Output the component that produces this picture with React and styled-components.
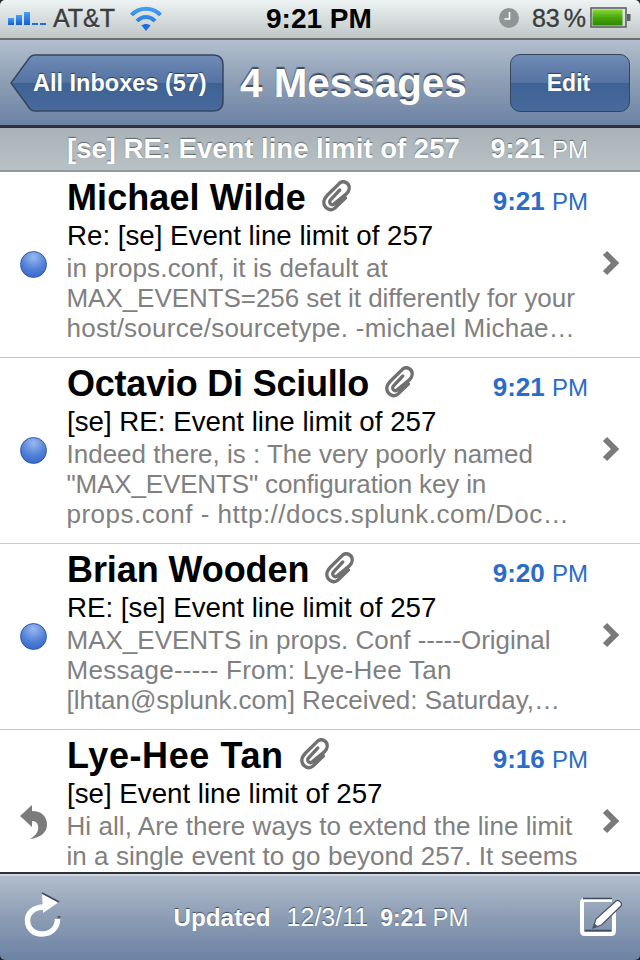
import React from 'react';
import styled, { createGlobalStyle } from 'styled-components';

// names and preview lines carry their own tracking, the device font runs a bit wider on some strings
const messages = [
  {
    name: 'Michael Wilde',
    nameTrack: 0.08,
    time: '9:21',
    subject: 'Re: [se] Event line limit of 257',
    preview: [
      ['in props.conf, it is default at', 0.16],
      ['MAX_EVENTS=256 set it differently for your', -0.05],
      ['host/source/sourcetype. -michael Michae…', 0.25],
    ],
    state: 'unread',
  },
  {
    name: 'Octavio Di Sciullo',
    nameTrack: -0.22,
    time: '9:21',
    subject: '[se] RE: Event line limit of 257',
    preview: [
      ['Indeed there, is : The very poorly named', 0],
      ['"MAX_EVENTS" configuration key in', -0.15],
      ['props.conf - http://docs.splunk.com/Doc…', 0.5],
    ],
    state: 'unread',
  },
  {
    name: 'Brian Wooden',
    nameTrack: -0.08,
    time: '9:20',
    subject: 'RE: [se] Event line limit of 257',
    preview: [
      ['MAX_EVENTS in props. Conf -----Original', 0],
      ['Message----- From: Lye-Hee Tan', 0.27],
      ['[lhtan@splunk.com] Received: Saturday,…', -0.02],
    ],
    state: 'unread',
  },
  {
    name: 'Lye-Hee Tan',
    nameTrack: 0.6,
    time: '9:16',
    subject: '[se] Event line limit of 257',
    preview: [
      ['Hi all, Are there ways to extend the line limit', 0.06],
      ['in a single event to go beyond 257. It seems', 0.05],
    ],
    state: 'replied',
  },
];

export default function App() {
  return (
    <>
      <GlobalStyle />
      <Phone>
        <StatusBar>
          <StatusLeft>
            <SignalIcon />
            <Carrier>AT&amp;T</Carrier>
            <WifiIcon />
          </StatusLeft>
          <Clock>9:21 PM</Clock>
          <StatusRight>
            <AlarmIcon />
            <Percent>83<PercentSign>%</PercentSign></Percent>
            <BatteryIcon />
          </StatusRight>
        </StatusBar>

        <NavBar>
          <BackButton>
            <BackShape />
            <BackLabel>All Inboxes (57)</BackLabel>
          </BackButton>
          <NavTitle>4 Messages</NavTitle>
          <EditButton>Edit</EditButton>
        </NavBar>

        <SubjectBar>
          <SubjectTitle>[se] RE: Event line limit of 257</SubjectTitle>
          <SubjectTime>9:21 <small>PM</small></SubjectTime>
        </SubjectBar>

        <List>
          {messages.map((m) => (
            <Row key={m.name}>
              <Marker>{m.state === 'unread' ? <Dot /> : <ReplyIcon />}</Marker>
              <RowBody>
                <RowHead>
                  <Sender $track={m.nameTrack}>{m.name}</Sender>
                  <ClipIcon />
                  <Time>{m.time} <small>PM</small></Time>
                </RowHead>
                <Subject>{m.subject}</Subject>
                {m.preview.map(([line, track]) => (
                  <Preview key={line} $track={track}>{line}</Preview>
                ))}
              </RowBody>
              <Chevron />
            </Row>
          ))}
        </List>

        <Toolbar>
          <RefreshSvg width="38" height="46" viewBox="0 0 38 46">
            <path
              d="M20 15 C10 15 3.500 21 3.500 28 C3.500 37 10 42 18 42 C27 42 33.500 36 33.500 27"
              fill="none"
              stroke="#fff"
              strokeWidth="5.500"
            />
            <path d="M33.500 25 H36.500" stroke="#3c4858" strokeWidth="1.500" />
            <path d="M18 1 L35 10 L19 21 Z" fill="#fff" />
            <path d="M18 1 L35 10" stroke="#3c4858" strokeWidth="1.500" />
          </RefreshSvg>
          <Updated>
            <UpdatedLabel>Updated</UpdatedLabel>
            <UpdatedDate>12/3/11</UpdatedDate>
            <UpdatedTime>9:21 <small>PM</small></UpdatedTime>
          </Updated>
          <ComposeIcon />
        </Toolbar>
      </Phone>
    </>
  );
}

function SignalIcon() {
  return (
    <svg width="40" height="14" viewBox="0 0 40 14">
      <defs>
        <linearGradient id="sig" x1="0" y1="0" x2="0" y2="1">
          <stop offset="0" stopColor="#4aa2f2" />
          <stop offset="1" stopColor="#0f5fd0" />
        </linearGradient>
      </defs>
      <rect x="0" y="7" width="6" height="7" fill="url(#sig)" />
      <rect x="8" y="4" width="6" height="10" fill="url(#sig)" />
      <rect x="16" y="1" width="6" height="13" fill="url(#sig)" />
      <rect x="24" y="12" width="6" height="2" fill="#1f6fd8" />
      <rect x="32" y="12" width="6" height="2" fill="#1f6fd8" />
    </svg>
  );
}

function WifiIcon() {
  return (
    <svg width="34" height="26" viewBox="0 0 34 26">
      <defs>
        <linearGradient id="wifi" gradientUnits="userSpaceOnUse" x1="0" y1="0" x2="0" y2="26">
          <stop offset="0" stopColor="#4aa6f6" />
          <stop offset="1" stopColor="#1368d8" />
        </linearGradient>
      </defs>
      <g fill="none" stroke="url(#wifi)" strokeWidth="4">
        <path d="M2.500 10 C10 1.500 24 1.500 31.500 10" />
        <path d="M8 16 C13 10.500 21 10.500 26 16" />
      </g>
      <path d="M12.500 20.500 C15 18.500 19 18.500 21.500 20.500 L17 26 Z" fill="#1a6fdc" />
    </svg>
  );
}

function AlarmIcon() {
  return (
    <svg width="22" height="22" viewBox="0 0 22 22">
      <circle cx="11" cy="11" r="10" fill="#8e9696" />
      <path d="M11.500 5 V12 H6.500" fill="none" stroke="#fff" strokeWidth="1.6" />
    </svg>
  );
}

function BatteryIcon() {
  return (
    <svg width="42" height="22" viewBox="0 0 42 22">
      <defs>
        <linearGradient id="bat" x1="0" y1="0" x2="0" y2="1">
          <stop offset="0" stopColor="#8ad83a" />
          <stop offset="0.5" stopColor="#49a80e" />
          <stop offset="1" stopColor="#2c8a04" />
        </linearGradient>
      </defs>
      <rect x="1" y="1" width="35" height="19" fill="none" stroke="#5d6362" strokeWidth="1.6" />
      <rect x="2.500" y="2.500" width="30" height="16" fill="url(#bat)" />
      <rect x="37" y="7" width="3.500" height="7" fill="#5d6362" />
    </svg>
  );
}

function BackShape() {
  return (
    <BackSvg width="214" height="58" viewBox="0 0 214 58">
      <defs>
        <linearGradient id="back" x1="0" y1="0" x2="0" y2="1">
          <stop offset="0" stopColor="#6f8bb5" />
          <stop offset="0.5" stopColor="#5473a2" />
          <stop offset="0.5" stopColor="#3f6294" />
          <stop offset="1" stopColor="#47699b" />
        </linearGradient>
      </defs>
      <path
        d="M25 1 H203 Q213 1 213 11 V47 Q213 57 203 57 H25 Q22 57 20 55 L1 29 L20 3 Q22 1 25 1 Z"
        fill="url(#back)"
        stroke="#34475f"
        strokeWidth="1.500"
      />
    </BackSvg>
  );
}

function ClipIcon() {
  return (
    <ClipSvg width="30" height="32" viewBox="0 0 32 32" preserveAspectRatio="none">
      <path
        d="M26 18 L15 28 C10 32 3 28 3 22 C3 19 5 17 7 15 L20 3 C24 0 31 3 30 9 C30 11 28 13 27 14 L14 24 C11 26 8 23 10 20 L20 10"
        fill="none"
        stroke="#707070"
        strokeWidth="3.500"
        strokeLinecap="round"
      />
    </ClipSvg>
  );
}

function ReplyIcon() {
  return (
    <svg width="28" height="34" viewBox="0 0 28 34">
      <path
        d="M0 11 L12 0 V6 C22 6 27 12 27 20 C27 28 19 33 10 34 C17 30 19 25 18 21 C18 18 15 16 12 16 V22 Z"
        fill="#7b7b7b"
      />
    </svg>
  );
}

function Chevron() {
  return (
    <ChevronSvg width="18" height="26" viewBox="0 0 18 26">
      <path d="M3 3 L13 13 L3 23" fill="none" stroke="#7a7a7a" strokeWidth="6" />
    </ChevronSvg>
  );
}

function ComposeIcon() {
  return (
    <svg width="44" height="40" viewBox="0 0 44 40">
      <path
        d="M32 3 H5 Q2 3 2 6 V34 Q2 37 5 37 H31 Q34 37 34 34 V15"
        fill="none"
        stroke="#fff"
        strokeWidth="4"
      />
      <path d="M3 1.500 H32" stroke="#3f4a5f" strokeWidth="1.600" />
      <path d="M5 33.500 H31" stroke="#3f4a5f" strokeWidth="1.600" />
      <path d="M13 31 L16 22 L36 4 C38 2 43 6 41 9 L21.500 28 Z" fill="#fff" stroke="#46546d" strokeWidth="1.200" />
      <path d="M13 31 L14.500 26.500 L17.500 29 Z" fill="#46546d" />
    </svg>
  );
}

const GlobalStyle = createGlobalStyle`
  html, body {
    margin: 0;
    padding: 0;
    background: #222;
  }
`;

const Phone = styled.div`
  width: 640px;
  height: 960px;
  display: flex;
  flex-direction: column;
  overflow: hidden;
  border-radius: 5px;
  font-family: 'Liberation Sans', Arial, sans-serif;
`;

const StatusBar = styled.div`
  flex: 0 0 40px;
  box-sizing: border-box;
  height: 40px;
  padding: 0 8px 2px 8px;
  display: flex;
  align-items: center;
  justify-content: space-between;
  position: relative;
  background: linear-gradient(#eef3f4, #d9dfdf 45%, #bfc7c8);
  border-bottom: 2px solid #6b6f72;
`;

const StatusLeft = styled.div`
  display: flex;
  align-items: center;
`;

const Carrier = styled.span`
  margin: 0 14px 0 5px;
  font-size: 25px;
  color: #3a3d3f;
  -webkit-text-stroke: 0.4px #3a3d3f;
  text-shadow: 0 1px 0 rgba(255, 255, 255, 0.6);
`;

const Clock = styled.span`
  position: absolute;
  left: 266px;
  top: 3px;
  font-size: 28px;
  font-weight: 700;
  color: #000;
`;

const StatusRight = styled.div`
  display: flex;
  align-items: center;
`;

const Percent = styled.span`
  margin: 0 4px 0 12px;
  font-size: 25px;
  color: #3a3d3f;
  -webkit-text-stroke: 0.4px #3a3d3f;
  text-shadow: 0 1px 0 rgba(255, 255, 255, 0.6);
`;

const PercentSign = styled.span`
  margin-left: 4px;
`;

const NavBar = styled.div`
  flex: 0 0 88px;
  box-sizing: border-box;
  height: 88px;
  padding: 14px 10px 0 10px;
  display: flex;
  align-items: flex-start;
  background: linear-gradient(#b3bfcf, #8d9db4 50%, #6c83a5);
  border-bottom: 3px solid #2d3239;
`;

const BackButton = styled.div`
  position: relative;
  box-sizing: border-box;
  width: 214px;
  height: 58px;
  padding-left: 23px;
  display: flex;
  align-items: center;
`;

const BackSvg = styled.svg`
  position: absolute;
  left: 0;
  top: 0;
`;

const BackLabel = styled.span`
  position: relative;
  color: #fff;
  font-size: 23.5px;
  font-weight: 700;
  text-shadow: 0 -1px 1px #2c3f5f;
`;

const NavTitle = styled.div`
  margin-left: 16px;
  flex: 1;
  line-height: 58px;
  color: #fff;
  font-size: 40.4px;
  font-weight: 700;
  text-shadow: 0 -2px 1px #3d4c63;
`;

const EditButton = styled.div`
  box-sizing: border-box;
  width: 120px;
  height: 58px;
  padding-right: 3px;
  display: flex;
  align-items: center;
  justify-content: center;
  color: #fff;
  font-size: 23px;
  font-weight: 700;
  text-shadow: 0 -1px 1px #2c3f5f;
  border-radius: 10px;
  border: 1.5px solid #34475f;
  background: linear-gradient(#6f8bb5, #5473a2 50%, #3f6294 50%, #47699b);
`;

const SubjectBar = styled.div`
  flex: 0 0 44px;
  box-sizing: border-box;
  height: 44px;
  padding: 0 52px 0 67px;
  display: flex;
  align-items: center;
  justify-content: space-between;
  color: #fff;
  background: linear-gradient(#a8b2b8, #b8c1c5);
  border-bottom: 2px solid #8f999e;
  text-shadow: 0 -1px 1px #5d666c;
`;

const SubjectTitle = styled.span`
  font-size: 27.5px;
  font-weight: 700;
`;

const SubjectTime = styled.span`
  font-size: 27px;
  font-weight: 700;

  small {
    font-size: 24px;
    font-weight: 400;
  }
`;

const List = styled.div`
  flex: 1;
  overflow: hidden;
  background: #fff;
`;

const Row = styled.div`
  box-sizing: border-box;
  height: 186px;
  display: flex;
  border-bottom: 1px solid #c8c8c8;
  position: relative;
`;

const Marker = styled.div`
  flex: 0 0 67px;
  height: 184px;
  display: flex;
  align-items: center;
  justify-content: center;
`;

const Dot = styled.div`
  width: 27px;
  height: 27px;
  border-radius: 50%;
  border: 1px solid #2c57a8;
  box-sizing: border-box;
  background: radial-gradient(circle at 50% 20%, #9ab8ee, #4f7fd8 55%, #2f5fc4);
`;

const RowBody = styled.div`
  flex: 1;
  padding-top: 6px;
`;

const RowHead = styled.div`
  display: flex;
  align-items: center;
  height: 40px;
`;

const Sender = styled.span`
  font-size: 36px;
  font-weight: 700;
  letter-spacing: ${(p) => p.$track}px;
  color: #000;
`;

const ClipSvg = styled.svg`
  margin: 0 0 4px 15px;
`;

const Time = styled.span`
  margin: 6px 52px 0 auto;
  font-size: 26px;
  font-weight: 700;
  color: #2a6cc8;

  small {
    font-size: 24px;
    font-weight: 400;
  }
`;

const Subject = styled.div`
  height: 35px;
  font-size: 27.7px;
  line-height: 36px;
  color: #000;
  white-space: nowrap;
`;

const Preview = styled.div`
  margin-left: -0.5px;
  font-size: 26px;
  line-height: 30px;
  letter-spacing: ${(p) => p.$track}px;
  color: #808080;
  white-space: nowrap;
`;

const ChevronSvg = styled.svg`
  position: absolute;
  right: 20px;
  top: 78px;
`;

const Toolbar = styled.div`
  flex: 0 0 88px;
  box-sizing: border-box;
  height: 88px;
  padding: 0 16px 0 24px;
  display: flex;
  align-items: center;
  justify-content: space-between;
  border-top: 2px solid #2d3239;
  box-shadow: inset 0 2px 0 #d0d6de;
  background: linear-gradient(#b3bfcf, #8d9db4 50%, #6c83a5);
`;

const RefreshSvg = styled.svg`
  margin-bottom: 4px;
`;

const Updated = styled.div`
  display: flex;
  align-items: baseline;
  gap: 16px;
  color: #fff;
  text-shadow: 0 -1px 1px #3d4c63;
`;

const UpdatedLabel = styled.span`
  font-size: 24.3px;
  font-weight: 700;
`;

const UpdatedDate = styled.span`
  font-size: 25px;
`;

const UpdatedTime = styled.span`
  margin-left: -4px;
  font-size: 23px;
  font-weight: 700;

  small {
    font-size: 24px;
    font-weight: 400;
  }
`;
